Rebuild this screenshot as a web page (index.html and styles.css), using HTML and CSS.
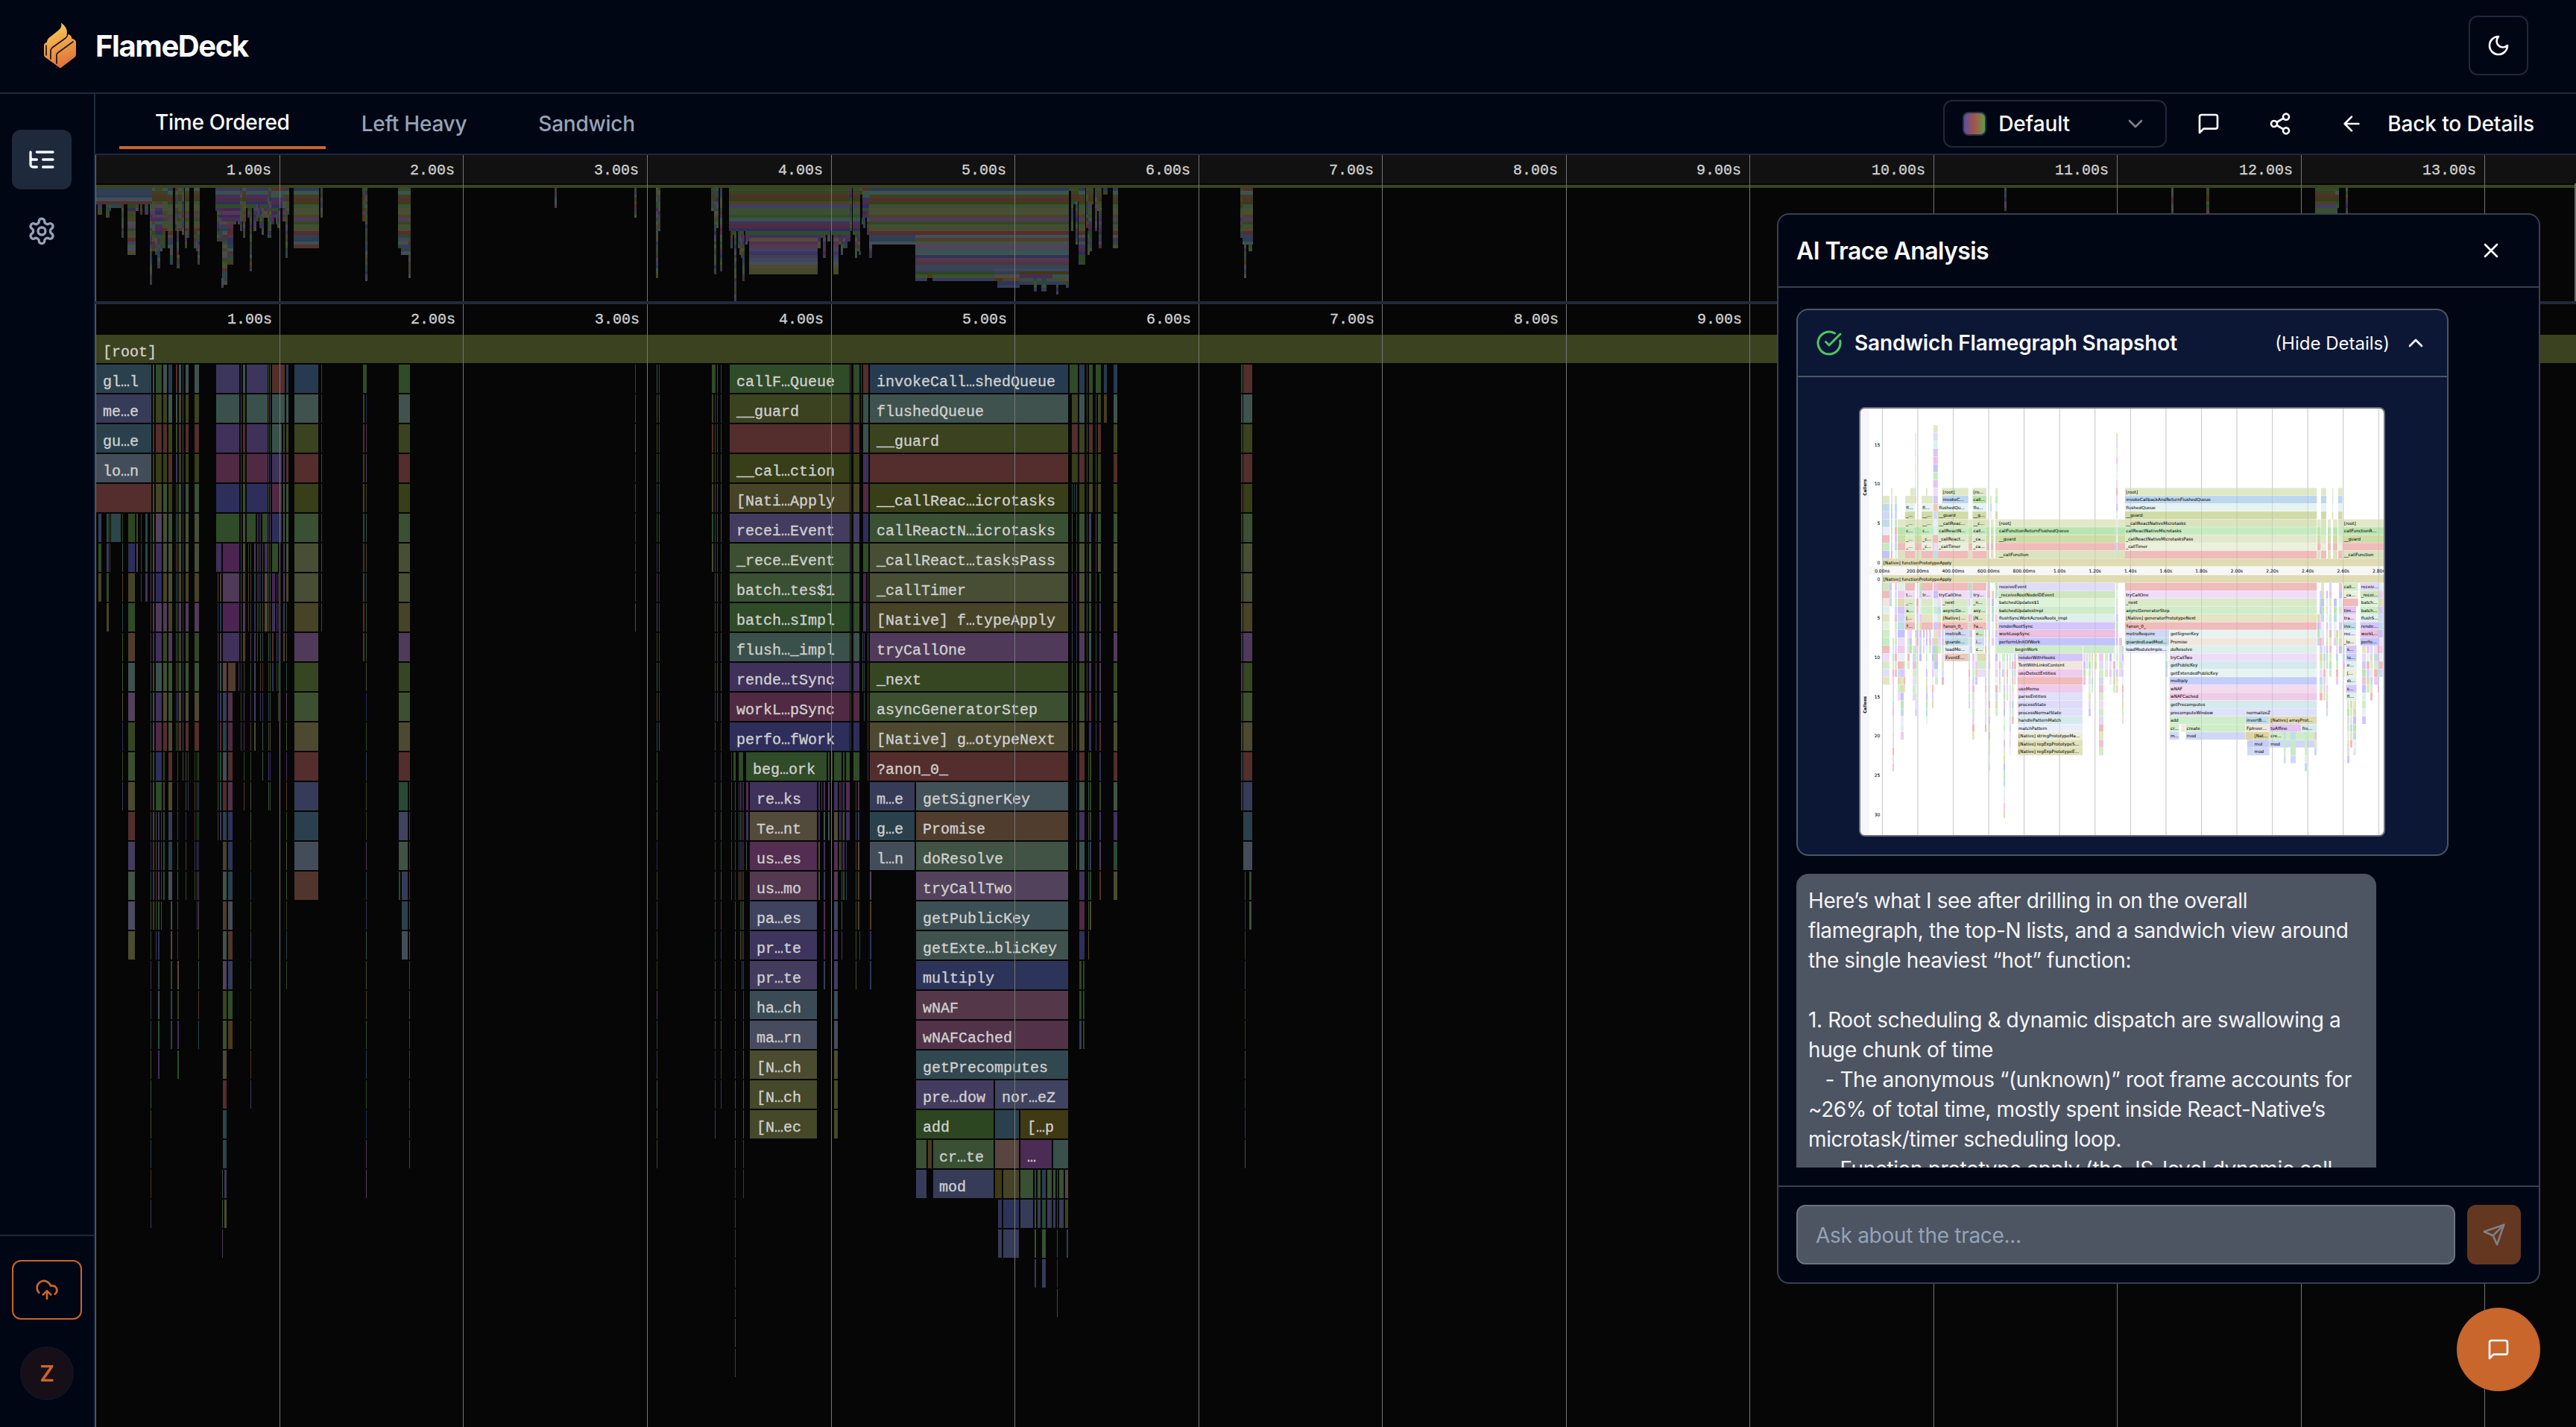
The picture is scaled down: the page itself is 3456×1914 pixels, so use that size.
FILE: index.html
```html
<!DOCTYPE html>
<html lang="en">
<head>
<meta charset="utf-8">
<title>FlameDeck</title>
<link rel="stylesheet" href="styles.css">
</head>
<body>
<div class="app">
  <header class="topbar">
    <div class="brand">
      <svg class="brand-mark" viewBox="0 0 44 62" width="44" height="62">
        <defs><linearGradient id="flame" x1="0.3" y1="0" x2="0.6" y2="1"><stop offset="0" stop-color="#f9cf55"/><stop offset=".45" stop-color="#f0a44a"/><stop offset="1" stop-color="#db6f38"/></linearGradient></defs>
        <path fill="url(#flame)" d="M23 .5C30 6 32 11 30.500 17L33 16C36 17 37 19 37.500 22C40 22 42.500 24 43 26V43C43 45 42 46 41 47L22 61.500 2 47C.500 46 0 45 0 43V31C0 29 1 28 4 26.500C4 23 6 21 9 19L19 11C23 8 24 5 23 .5Z"/>
        <g fill="none" stroke="#1a1416" stroke-width="1.700" stroke-linecap="round"><path d="M3 31V44"/><path d="M9 49V38C9 36 9.500 35.500 11 34L29 21C31 19 32 17 31.500 16"/><path d="M17 55V44C17 42 18 41 19 40.500L39 26"/></g>
      </svg>
      <span class="brand-name">FlameDeck</span>
    </div>
    <button class="theme-btn"><svg class="ic" viewBox="0 0 24 24" width="32" height="32"><path d="M12 3a6 6 0 0 0 9 9 9 9 0 1 1-9-9Z"/></svg></button>
  </header>
  <div class="body">
    <aside class="sidebar">
      <nav class="side-nav">
        <a class="side-item active"><svg class="ic" viewBox="0 0 24 24" width="40" height="40"><path d="M21 12h-8M21 6H8M21 18h-8M3 6v4c0 1.100.9 2 2 2h3M3 10v6c0 1.100.9 2 2 2h3"/></svg></a>
        <a class="side-item"><svg class="ic" viewBox="0 0 24 24" width="40" height="40"><path d="M12.220 2h-.44a2 2 0 0 0-2 2v.18a2 2 0 0 1-1 1.730l-.43.25a2 2 0 0 1-2 0l-.15-.08a2 2 0 0 0-2.730.73l-.22.38a2 2 0 0 0 .73 2.730l.15.1a2 2 0 0 1 1 1.720v.51a2 2 0 0 1-1 1.740l-.15.09a2 2 0 0 0-.73 2.730l.22.38a2 2 0 0 0 2.730.73l.15-.08a2 2 0 0 1 2 0l.43.25a2 2 0 0 1 1 1.730V20a2 2 0 0 0 2 2h.44a2 2 0 0 0 2-2v-.18a2 2 0 0 1 1-1.730l.43-.25a2 2 0 0 1 2 0l.15.08a2 2 0 0 0 2.730-.73l.22-.39a2 2 0 0 0-.73-2.730l-.15-.08a2 2 0 0 1-1-1.740v-.5a2 2 0 0 1 1-1.740l.15-.09a2 2 0 0 0 .73-2.730l-.22-.38a2 2 0 0 0-2.730-.73l-.15.08a2 2 0 0 1-2 0l-.43-.25a2 2 0 0 1-1-1.730V4a2 2 0 0 0-2-2z"/><circle cx="12" cy="12" r="3"/></svg></a>
      </nav>
      <div class="side-foot">
        <button class="upload"><svg class="ic" viewBox="0 0 24 24" width="32" height="32"><path d="M12 13v8M4 14.899A7 7 0 1 1 15.710 8h1.790a4.500 4.500 0 0 1 2.500 8.242M8 17l4-4 4 4"/></svg></button>
        <div class="avatar">Z</div>
      </div>
    </aside>
    <main class="content">
      <div class="toolbar">
        <div class="tabs">
          <a class="tab active">Time Ordered</a>
          <a class="tab">Left Heavy</a>
          <a class="tab">Sandwich</a>
        </div>
        <div class="tools">
          <div class="select"><i class="swatch"></i><span>Default</span><svg class="ic dim" viewBox="0 0 24 24" width="32" height="32"><path d="m6 9 6 6 6-6"/></svg></div>
          <svg class="ic tool-chat" viewBox="0 0 24 24" width="32" height="32"><path d="M21 15a2 2 0 0 1-2 2H7l-4 4V5a2 2 0 0 1 2-2h14a2 2 0 0 1 2 2z"/></svg>
          <svg class="ic tool-share" viewBox="0 0 24 24" width="32" height="32"><circle cx="18" cy="5" r="3"/><circle cx="6" cy="12" r="3"/><circle cx="18" cy="19" r="3"/><path d="m8.590 13.510 6.830 3.980M15.410 6.510l-6.820 3.980"/></svg>
          <a class="back"><svg class="ic" viewBox="0 0 24 24" width="32" height="32"><path d="m12 19-7-7 7-7M19 12H5"/></svg><span>Back to Details</span></a>
        </div>
      </div>
      <svg id="minimap" class="minimap" width="3328" height="196" viewBox="128 208 3328 196"></svg>
      <div class="divider"></div>
      <svg id="flame-chart" class="flame-chart" width="3328" height="1506" viewBox="128 408 3328 1506"></svg>
    </main>
  </div>

  <section class="panel">
    <div class="panel-head"><h2>AI Trace Analysis</h2><svg class="ic" viewBox="0 0 24 24" width="32" height="32"><path d="M18 6 6 18M6 6l12 12"/></svg></div>
    <div class="panel-body">
      <div class="card">
        <div class="card-head">
          <svg class="ic ok" viewBox="0 0 24 24" width="36" height="36"><path d="M21.801 10A10 10 0 1 1 17 3.335"/><path d="m9 11 3 3L22 4"/></svg>
          <span class="card-title">Sandwich Flamegraph Snapshot</span>
          <span class="card-toggle">(Hide Details)</span>
          <svg class="ic" viewBox="0 0 24 24" width="32" height="32"><path d="m18 15-6-6-6 6"/></svg>
        </div>
        <div class="card-body"><svg id="snapshot" class="snapshot" width="702" height="572" viewBox="0 0 702 572"></svg></div>
      </div>
      <div class="message">Here’s what I see after drilling in on the overall
flamegraph, the top-N lists, and a sandwich view around
the single heaviest “hot” function:

1. Root scheduling &amp; dynamic dispatch are swallowing a
huge chunk of time
   - The anonymous “(unknown)” root frame accounts for
~26% of total time, mostly spent inside React-Native’s
microtask/timer scheduling loop.
   - Function.prototype.apply (the JS-level dynamic call</div>
    </div>
    <div class="panel-foot">
      <div class="ask">Ask about the trace...</div>
      <button class="send"><svg class="ic" viewBox="0 0 24 24" width="32" height="32"><path d="m22 2-7 20-4-9-9-4ZM22 2 11 13"/></svg></button>
    </div>
  </section>
  <button class="fab"><svg class="ic" viewBox="0 0 24 24" width="32" height="32"><path d="M21 15a2 2 0 0 1-2 2H7l-4 4V5a2 2 0 0 1 2-2h14a2 2 0 0 1 2 2z"/></svg></button>
</div>
<script src="app.js"></script>
</body>
</html>
```
FILE: styles.css
```css
* { box-sizing: border-box; }
body {
  margin: 0;
  background: #010614;
  color: #f8fafc;
  font-family: Inter, "Liberation Sans", sans-serif;
  font-size: 28px;
  overflow: hidden;
}
button { font: inherit; color: inherit; background: none; border: 0; padding: 0; }
svg { display: block; flex: none; }
.ic { fill: none; stroke: currentColor; stroke-width: 2; stroke-linecap: round; stroke-linejoin: round; }

.app { position: relative; display: flex; flex-direction: column; width: 3456px; height: 1914px; overflow: hidden; }
.topbar {
  display: flex; align-items: flex-start; justify-content: space-between;
  height: 126px; padding: 21px 64px 0 59px;
  border-bottom: 2px solid #1e293b;
}
.brand { display: flex; align-items: center; height: 80px; gap: 25px; }
.brand-mark { margin-top: -1px; }
.brand-name { font-size: 40px; font-weight: 700; letter-spacing: -1.4px; line-height: 80px; margin-top: 2px; }
.theme-btn { display: grid; place-items: center; width: 80px; height: 80px; border: 2px solid #1e293b; border-radius: 12px; }

.body { display: flex; flex: 1; min-height: 0; }
.sidebar { display: flex; flex-direction: column; justify-content: space-between; width: 128px; border-right: 2px solid #1e293b; }
.side-nav { display: flex; flex-direction: column; gap: 16px; padding: 48px 16px 0; }
.side-item { display: grid; place-items: center; width: 80px; height: 80px; border-radius: 12px; color: #94a3b8; }
.side-item.active { background: #1e293b; color: #f8fafc; }
.side-foot { display: flex; flex-direction: column; align-items: center; gap: 36px; height: 258px; padding-top: 32px; border-top: 2px solid #1e293b; }
.upload { display: grid; place-items: center; width: 94px; height: 80px; border: 2px solid #c8662b; border-radius: 12px; color: #c8662b; }
.avatar { display: grid; place-items: center; width: 72px; height: 72px; border: 2px solid #0e1424; border-radius: 50%; background: #170f18; color: #c8662b; font-size: 30px; font-weight: 600; }

.content { display: flex; flex-direction: column; width: 3328px; background: #060606; }
.toolbar { display: flex; justify-content: space-between; height: 82px; padding: 0 56px 0 32px; background: #010614; border-bottom: 2px solid #1e293b; }
.tabs { display: flex; height: 74px; }
.tab { padding: 23px 48px 0; line-height: 34px; font-weight: 500; color: #94a3b8; letter-spacing: -.25px; }
.tab.active { padding-top: 21px; color: #f8fafc; border-bottom: 4px solid #c8662b; }
.tools { display: flex; align-items: center; height: 80px; font-weight: 500; letter-spacing: -.12px; }
.select { display: flex; align-items: center; width: 300px; height: 64px; padding: 0 24px; border: 2px solid #1e293b; border-radius: 12px; }
.select span { flex: 1; padding-left: 16px; }
.swatch { width: 32px; height: 32px; border: 2px solid #2a3448; border-radius: 8px; background: linear-gradient(90deg, #5b4fa0, #a35548 50%, #5f9a48); }
.dim { opacity: .5; }
.tool-chat { margin-left: 40px; }
.tool-share { margin-left: 64px; }
.back { display: flex; align-items: center; gap: 32px; margin-left: 64px; }

.divider { height: 4px; background: #1f2a3d; }
.lane-text, .tick {
  font-family: "Courier New", "Liberation Mono", monospace; font-size: 20px;
  fill: #cfcfcf; stroke: #cfcfcf; stroke-width: .35px; white-space: pre;
}
.tick { text-anchor: end; }

.panel {
  position: absolute; left: 2384px; top: 286px;
  display: flex; flex-direction: column; width: 1024px; height: 1436px;
  background: #010614; border: 2px solid #374151; border-radius: 16px;
}
.panel-head { display: flex; align-items: center; justify-content: space-between; height: 98px; padding: 0 48px 0 24px; border-bottom: 2px solid #374151; }
.panel-head h2 { margin: 0; font-size: 32px; font-weight: 600; letter-spacing: -.6px; }
.panel-body { display: flex; flex-direction: column; flex: none; gap: 24px; height: 1152px; margin: 28px 24px 0; overflow: hidden; }
.card { flex: none; width: 875px; height: 734px; background: #0c1736; border: 2px solid #4b5563; border-radius: 16px; }
.card-head { display: flex; align-items: center; height: 90px; padding: 0 26px 0 24px; border-bottom: 2px solid #4b5563; }
.ok { color: #4fc75f; }
.card-title { flex: 1; padding-left: 16px; font-weight: 600; letter-spacing: -.12px; }
.card-toggle { font-size: 24px; padding-right: 19px; }
.card-body { padding: 40px 0 0 82px; }
.snapshot { box-sizing: content-box; border: 2px solid #6b7280; border-radius: 8px; background: #fff; }
.snapshot text { font-family: "DejaVu Sans", sans-serif; font-size: 5.7px; fill: #111; stroke: #111; stroke-width: .08px; white-space: pre; }
.snapshot .side { font-weight: 700; text-anchor: middle; }
.snapshot .num { text-anchor: end; font-size: 6px; }
.snapshot .mid { text-anchor: middle; font-size: 6px; }
.message { flex: none; width: 778px; padding: 16px; background: #4d5462; border-radius: 16px; color: #f3f4f6; line-height: 40px; letter-spacing: -.4px; white-space: pre; }
.panel-foot { display: flex; gap: 16px; margin-top: auto; height: 130px; padding: 24px 24px; border-top: 2px solid #374151; }
.ask { width: 884px; height: 80px; padding: 0 24px; line-height: 78px; letter-spacing: -.3px; color: #94a3b8; background: #4d5462; border: 2px solid #6b7280; border-radius: 12px; }
.send { display: grid; place-items: center; width: 72px; height: 80px; border-radius: 12px; background: #643720; color: #7f7f85; }
.fab { position: absolute; left: 3296px; top: 1754px; display: grid; place-items: center; width: 112px; height: 112px; border-radius: 50%; background: #c8662b; }
```
FILE: app.js
```js
const NS = 'http://www.w3.org/2000/svg';
function add(parent, tag, attrs, text) {
  const el = document.createElementNS(NS, tag);
  for (const k in attrs) el.setAttribute(k, attrs[k]);
  if (text !== undefined) el.textContent = text;
  parent.appendChild(el);
  return el;
}

// Frame colours, one letter each.
const C = {
  A: '#2a414d', B: '#363b58', C: '#434d59', R: '#532e2c', G: '#2f4b28', g: '#395033',
  O: '#3b4220', o: '#373e18', K: '#474326', L: '#484e34', N: '#273b50', T: '#3f524e',
  t: '#3a514b', P: '#433c5f', p: '#3f315a', M: '#502a42', I: '#2e2e5b', V: '#503a5a',
  v: '#4b2452', F: '#364622', H: '#3c5031', J: '#4d4930', S: '#425058', D: '#503d2e',
  E: '#405344', W: '#52425c', X: '#3b4f54', Y: '#2d3459', Z: '#543849', z: '#513248',
  U: '#324850', Q: '#4a4a63', c: '#3c365c', r: '#50352c', h: '#524a3a', u: '#532d52',
  m: '#533850', q: '#40435f', i: '#3d355e', a: '#3a4b55', b: '#464b5e', k: '#4a4b2f',
  l: '#454829', s: '#284a35', y: '#594440', f: '#3f3914', j: '#4a2c54', d: '#4a3a20',
  w: '#2b4620', e: '#2a4649'
};
const NOISE = 'GTpoJEDIAKVsFeRWHLcBzgOt';
const STD = 'NTORogLLKVFHJR';

// [x, width, first row, colours per row] or [x, width, first row, last row] for slivers.
const columns = [
  [129,74,0,'ABACR'],[132,4,5,'BGK'],[143,3,5,'sBGK'],[147,1,5,6],[149,13,5,'e'],[164,1,5,14],
  [172,9,5,'wIKGDTWFHJRPEQk'],[183,2,5,6],[189,1,5,7],[195,3,5,'eec'],[202,1,5,28],
  [205,2,0,'TORogLLVVpDTWFgJRpd'],[209,8,0,'GORoKWpIVptpMIG'],[209,1,15,19],[212,2,15,'pcVsYACsp'],[216,1,15,18],
  [219,5,0,'TORogLLKVFHJR'],[219,2,13,'wKFss'],[226,5,0,'NTORogLLKVHHJRJBAC'],[229,2,18,'tyseA'],
  [236,2,0,'RTGc'],[236,1,4,12],[238,1,4,20],[238,2,20,'yopG'],
  [240,3,0,'TKRogLLKVFHJR'],[245,1,0,13],[249,4,0,'TORogLLKVFHJR'],[249,1,13,17],[252,1,13,14],
  [261,6,0,'TORogLLKVFHJR'],[261,1,13,17],[264,1,13,18],[266,1,13,22],
  [290,31,0,'ctpMIG'],[290,7,6,'p'],[299,22,6,'vVvp'],[299,5,10,'yBACRAKEDEWFHJRee'],[301,3,27,'ck'],[298,1,27,29],
  [306,10,10,'D'],[306,6,11,'zMRzYYACrBGd'],[320,1,10,10],[295,2,7,'DYVtBRsep'],[292,1,7,15],
  [323,1,0,12],[326,3,0,'TORogLLKVD'],[327,1,10,14],[331,28,0,'ctpMI'],[331,12,5,'G'],[345,1,5,9],[347,1,5,8],[349,1,5,11],
  [352,7,5,'G'],[333,1,6,8],[336,1,6,24],[341,2,6,'VAIcPPk'],[352,1,6,13],[355,4,6,'pyJ'],
  [360,1,0,14],[362,1,0,14],[365,17,0,'Rt'],[365,13,2,'tpMI'],[365,8,6,'G'],[365,4,7,'vp'],[365,2,9,'RI'],[371,1,7,10],[373,1,7,11],
  [380,2,2,'GcETpVcK'],[384,3,0,'NTORgHLK'],[384,1,8,20],[395,32,0,STD + 'BACr'],[431,1,0,8],
  [487,5,0,'G'],[487,2,1,'OROKsoDRd'],[491,1,1,27],[535,15,0,'GTORogLLKVFHJR'],[535,12,14,'sqE'],[535,2,17,'s'],[539,8,17,'BAC'],[549,1,14,26],
  [852,1,0,8],[881,1,0,26],[884,1,0,12],
  [955,5,0,'G'],[955,2,1,'OROKsk'],[959,1,1,25],[962,1,0,11],[967,1,0,24],
  [979,161,0,'GORoKPHgGtpMI'],[981,1,13,17],[984,3,13,'G'],[991,6,13,'G'],[1001,108,13,'G'],[1111,2,13,'GVt'],[1116,1,13,13],
  [1119,10,13,'G'],[1131,2,13,'GpTpF'],[1135,5,13,'Gup'],[986,1,14,33],[991,1,14,17],[993,1,14,19],[995,1,14,20],[997,1,14,27],[1001,3,14,'up'],[1001,1,16,16],
  [1006,90,14,'phumqiPabkll'],[1119,5,14,'phumqiPabkll'],[1098,2,14,'pphk'],[1102,1,14,14],[1105,2,14,'utpcuvB'],
  [1126,2,14,'vck'],[1129,1,14,19],[1135,1,16,17],[1148,1,14,20],[1151,2,14,'upydD'],[1153,1,19,19],
  [1141,1,0,12],[1145,8,0,'GORoKPHgGtpMIG'],[1155,1,0,1],[1158,7,0,'RttpMIG'],[1158,4,7,'vp'],[1164,1,7,13],[1157,1,9,10],[1159,1,9,11],
  [1167,266,0,STD],[1167,60,14,'BAC'],[1167,2,17,'WDYY'],[1229,204,14,'SDEWXTYZzU'],
  [1229,104,24,'P'],[1335,98,24,'q'],[1229,104,25,'w'],[1335,32,25,'Ay'],[1369,64,25,'f'],
  [1229,14,26,'gB'],[1245,5,26,'d'],[1252,81,26,'gB'],[1369,42,26,'j'],[1413,20,26,'t'],
  [1335,9,27,'f'],[1346,21,27,'KYB'],[1339,5,28,'YB'],[1369,17,27,'gB'],[1388,2,27,'AggB'],[1392,4,27,'gB'],[1398,5,27,'AsgB'],
  [1405,6,27,'gB'],[1413,3,27,'gB'],[1418,1,27,31],[1421,6,27,'gB'],[1429,4,27,'yF'],[1431,2,29,'B'],
  [1435,11,0,'G'],[1438,8,1,'ORo'],[1438,1,4,12],[1441,1,4,4],[1444,1,4,16],[1448,7,0,STD + 'EptpMI'],[1448,3,20,'wwB'],[1453,2,20,'www'],
  [1458,1,0,11],[1461,5,0,'GORoK'],[1461,3,5,'PHgGtpMI'],[1460,1,13,19],[1462,2,13,'wwsBsJ'],
  [1470,7,0,'G'],[1470,1,1,12],[1473,4,1,'ORoKgL'],[1475,2,7,'scpVcMIGpVR'],[1481,4,0,'Nd'],[1494,5,0,STD + 'EpsJ'],
  [1665,2,0,'GTOKRogLLcVFHAB'],[1668,12,0,'RTORogLLKVFHJRBAC'],[1676,3,17,'GH'],[1670,1,17,26]
];
const overviewOnly = [
  [745,1,0,5],[2690,1,0,6],[2914,1,0,8],[2961,2,0,'GGRoHsDy'],[3107,28,0,'GORoKPHgG'],[3134,3,0,'GTRoGg'],[3148,1,0,9]
];
const colourAt = (col, i) => {
  if (typeof col[3] === 'string') return C[col[3][i]];
  return C[NOISE[(col[0] * 7 + i * 5 + ((col[0] + i * i) % 3)) % NOISE.length]];
};
const rowsIn = col => typeof col[3] === 'string' ? col[3].length : col[3] - col[2] + 1;

const tickX = k => Math.floor(128.8 + 246.55 * k);
function ticks(svg, y, top, bottom, dx) {
  for (let k = 0; k < 14; k++) {
    add(svg, 'rect', { x: tickX(k), y: top, width: 1, height: bottom - top, fill: '#747474' });
    if (k) add(svg, 'text', { x: tickX(k) - dx, y, class: 'tick' }, k + '.00s');
  }
}

// Overview strip
const mini = document.getElementById('minimap');
add(mini, 'rect', { x: 128, y: 208, width: 3328, height: 38, fill: '#111111' });
add(mini, 'rect', { x: 128, y: 248, width: 3328, height: 4, fill: C.O });
for (const col of columns.concat(overviewOnly)) {
  for (let i = 0; i < rowsIn(col); i++) {
    const r = col[2] + i, y = Math.round(252 + 4.48 * r);
    add(mini, 'rect', { x: col[0] - 1, y, width: col[1] + 2, height: Math.round(252 + 4.48 * (r + 1)) - y, fill: colourAt(col, i) });
  }
}
ticks(mini, 234, 208, 404, 11);
add(mini, 'rect', { x: 3454, y: 246, width: 2, height: 158, fill: '#6a6a6a' });

// Main chart
const chart = document.getElementById('flame-chart');
add(chart, 'rect', { x: 129, y: 449, width: 3327, height: 38, fill: C.O });
for (const col of columns) {
  for (let i = 0; i < rowsIn(col); i++) {
    add(chart, 'rect', { x: col[0], y: 489 + 40 * (col[2] + i), width: col[1], height: 38, fill: colourAt(col, i) });
  }
}
const labels = [
  [138, -1, ['[root]']],
  [138, 0, ['gl…l', 'me…e', 'gu…e', 'lo…n']],
  [988, 0, ['callF…Queue', '__guard', '', '__cal…ction', '[Nati…Apply', 'recei…Event', '_rece…Event', 'batch…tes$1', 'batch…sImpl', 'flush…_impl', 'rende…tSync', 'workL…pSync', 'perfo…fWork']],
  [1010, 13, ['beg…ork']],
  [1015, 14, ['re…ks', 'Te…nt', 'us…es', 'us…mo', 'pa…es', 'pr…te', 'pr…te', 'ha…ch', 'ma…rn', '[N…ch', '[N…ch', '[N…ec']],
  [1176, 0, ['invokeCall…shedQueue', 'flushedQueue', '__guard', '', '__callReac…icrotasks', 'callReactN…icrotasks', '_callReact…tasksPass', '_callTimer', '[Native] f…typeApply', 'tryCallOne', '_next', 'asyncGeneratorStep', '[Native] g…otypeNext', '?anon_0_', 'm…e', 'g…e', 'l…n']],
  [1238, 14, ['getSignerKey', 'Promise', 'doResolve', 'tryCallTwo', 'getPublicKey', 'getExte…blicKey', 'multiply', 'wNAF', 'wNAFCached', 'getPrecomputes', 'pre…dow', 'add']],
  [1344, 24, ['nor…eZ']], [1378, 25, ['[…p', '…']], [1260, 26, ['cr…te', 'mod']]
];
for (const [x, row, list] of labels) {
  list.forEach((t, i) => { if (t) add(chart, 'text', { x, y: 518 + 40 * (row + i), class: 'lane-text' }, t); });
}
ticks(chart, 434, 408, 1914, 10);

// Sandwich snapshot
const snap = document.getElementById('snapshot');
const S = {
  r: '#f0bbbb', o: '#cfdca6', e: '#e0e8c8', n: '#bcd7f0', w: '#e6f3f1', c: '#dae3bd', g: '#c5ebc1', G: '#b9e6b0',
  l: '#e2e8cb', L: '#ebefdb', k: '#e0dbb2', p: '#dfdbfb', q: '#cfe6bf', b: '#dff3dc', B: '#cfecca', t: '#dff0ec',
  P: '#d4c6fa', m: '#eec0e0', i: '#c3c3fb', v: '#eedcf8', x: '#dbe9c9', y: '#d0edc9', j: '#e5e5c3', s: '#cfd9f7',
  d: '#bfdde6', a: '#e9eefb', z: '#f1e7dd', h: '#efcbee', u: '#dfe1fa', T: '#d5eaec', f: '#efc8bb', M: '#f3daee',
  N: '#eecbe8', Y: '#c5cefa', H: '#e2c5f3', K: '#dbd5a0', J: '#dfe2bc'
};
const STEP = 10.53;
const yUp = n => 201.3 - STEP * n, yDown = n => 223.3 + STEP * n;
function frame(x, w, y, colour, text) {
  add(snap, 'rect', { x, y, width: w, height: 10.2, fill: S[colour] });
  if (text) add(snap, 'text', { x: x + 1.3, y: y + 7.2 }, text);
}
function down(x, w, row, colours, texts) {
  [...colours].forEach((c, i) => frame(x, w, yDown(row + i), c, texts && texts[i]));
}
function up(x, w, row, colours, texts) {
  [...colours].forEach((c, i) => frame(x, w, yUp(row - i), c, texts && texts[i]));
}
add(snap, 'rect', { x: 0, y: 0, width: 12, height: 572, fill: '#f6f6f6' });
add(snap, 'rect', { x: 12, y: 211.7, width: 690, height: 11.3, fill: '#f7f7f7' });
for (let k = 0; k < 15; k++) add(snap, 'rect', { x: 28.9 + 47.57 * k, y: 0, width: 0.9, height: 572, fill: '#d6d6d6' });

// narrow frames around the labelled stacks
const SN = 'yPrtvGsjhBdmkpaxi';
function sliver(x, w, r0, r1) {
  for (let r = r0; r <= r1; r++) frame(x, w, yDown(r), SN[(Math.round(x * 3) + r * 5 + (r * r) % 3) % SN.length]);
}
[[38,4,1,3],[43,2,8,24],[46,3,1,12],[50,9.5,1,6],[50,9.5,7,11],[50,4,12,15],[54,4,12,20],[58,2,11,14],[63,3,7,11],[66,3,7,9],[70,4,9,15],[73.5,2,7,17],[75,3,3,8],
 [79,3,1,10],[84,2,7,9],[88,2,5,18],[92,3,6,9],[96,2,8,16],[98,6,1,12],[100,4,9,13],[104,4,3,9],[109,3,7,13],[145,2,1,16],[147,3,1,9],[150,3,10,20],[154,3,10,13],
 [157,10,10,12],[167,2,7,19],[170,4,1,6],[172,2,7,24],[176,3,2,8],[181,3,1,9],[181,3,10,17],[186,2,10,14],[190,2,9,12],[192,2,10,30],[196,2,10,15],[200,1.5,10,22],[203,2.5,10,18],
 [206,3,10,13],[299,3,10,13],[303,2,10,11],[306,3,9,17],[310,2,9,14],[314,3,10,11],[320,6,10,22],[328,4,9,12],[334,3,9,13],[339,3,10,14],[343,2.5,1,14],[347,4,8,12],[351,2,9,18],
 [613,3,5,8],[616,4,2,15],[618,4,1,8],[621,3,9,15],[625,2,2,17],[629,3,1,12],[635,4,3,8],[638,3,7,13],[642,4,1,9],[648,2,8,12],[653,3,16,23],[657,3,16,21],[661,4,16,22],
 [673,5,9,18],[679,4,9,14],[684,3,9,15],[689,5,9,13],[696,5,1,12],[694,2,3,14]].forEach(a => sliver(...a));

const native = '[Native] functionPrototypeApply';
down(29.5, 672.5, 0, 'k', [native]);
up(29.5, 672.5, 0, 'k', [native]);
down(29.5, 9.5, 1, 'qrztjbygrvxuj');
down(60, 13, 1, 'rvxyjr', ['', 't…', '_…', 'a…', '[…', '?…']);
down(82, 15, 1, 'rvxyjr', ['', 'tr…', '', '', '', '']);
down(104, 40.7, 1, 'rv', ['', 'tryCallOne']);
down(109.3, 35.3, 3, 'xyjr', ['_next', 'asyncGe…', '[Native] …', '?anon_0_']);
down(112.7, 32, 7, 'sdaf', ['metroR…', 'guarde…', 'loadMo…', 'EventE…']);
down(150.3, 18.7, 1, 'rvxyjr', ['', 'try…', '_n…', 'asy…', '[N…', '?a…']);
down(153.7, 12.3, 7, 'gsb', ['e…', 'l…', 'c…']);
down(184.7, 157, 1, 'pqbBtPmi', ['receiveEvent', '_receiveRootNodeIDEvent', 'batchedUpdates$1', 'batchedUpdatesImpl', 'flushSyncWorkAcrossRoots_impl', 'renderRootSync', 'workLoopSync', 'performUnitOfWork']);
down(181, 25, 9, 'y');
down(206.3, 92, 9, 'y', ['beginWork']);
down(299, 42, 9, 'B');
down(210.7, 87.3, 10, 'PzhrhupuTaLJJ', ['renderWithHooks', 'TextWithLinksContent', 'useDetectEntities', '', 'useMemo', 'parseEntities', 'processState', 'processNormalState', 'handlePatternMatch', 'matchPattern', '[Native] stringPrototypeMa…', '[Native] regExpPrototypeS…', '[Native] regExpPrototypeE…']);
down(355, 257.3, 1, 'rvxyjr', ['', 'tryCallOne', '_next', 'asyncGeneratorStep', '[Native] generatorPrototypeNext', '?anon_0_']);
down(355, 59, 7, 'sda', ['metroRequire', 'guardedLoadMod…', 'loadModuleImple…']);
down(409.5, 2.5, 10, 'tds');
down(414.7, 197.6, 7, 'wztvTwYMNT', ['getSignerKey', 'Promise', 'doResolve', 'tryCallTwo', 'getPublicKey', 'getExtendedPublicKey', 'multiply', 'wNAF', 'wNAFCached', 'getPrecomputes']);
down(414.7, 102, 17, 'uy', ['precomputeWindow', 'add']);
down(516.7, 95.6, 17, 'u', ['normalizeZ']);
down(516.7, 32, 18, 'dz', ['invertB…', 'FpInver…']);
down(549, 63.3, 18, 'k', ['[Native] arrayProt…']);
down(414.7, 12.7, 19, 'ys', ['cr…', 'm…']);
down(430.5, 5, 19, 'z');
down(436.3, 80, 19, 'ys', ['create', 'mod']);
down(549, 42, 19, 'H', ['toAffine']);
down(591.5, 20.8, 19, 'T', ['fro…']);
down(516.7, 10.5, 20, 'K');
down(527.3, 21.3, 20, 'KYs', ['[Nat…', 'mul', 'mod']);
down(519, 8, 21, 'Ys');
down(549, 63.3, 20, 'ys', ['cre…', 'mod']);
down(568, 2.5, 20, 'dgys');
down(577, 7, 20, 'dggs');
down(596, 3, 20, 'gyytd');
down(609, 3, 20, 'fjs');
down(647.5, 20, 1, 'yLr', ['call…', '_ca…']);
down(647.5, 17.5, 4, 'HvdaL', ['tim…', 'tra…', 'inv…', 'rec…', '_lo…']);
down(651.5, 14, 9, 'PYtLtPt', ['s…', 'lo…', 'e…', '[…', 'di…', 's…', 'fl…']);
down(670.5, 25, 1, 'pqbBtPmi', ['receiv…', '_recei…', 'batch…', 'batch…', 'flushS…', 'rende…', 'workL…', 'perfo…']);

up(29.5, 9.5, 8, 'edsdargi');
up(41, 2, 9, 'evdnsgBsr');
up(46, 3, 8, 'edsgrPdt');
[[50,10],[73,9],[97,7],[145,5],[169,4],[175,3.5],[181,3.7],[341.6,13.4],[613,4.5],[619,6],[627,4],[634,6],[641,5.5]].forEach(([x, w]) => up(x, w, 5, 'eGorc'));
up(67, 6, 9, 'en'); up(88, 2, 9, 'eg'); up(174, 2, 8, 'edw'); up(181, 3, 9, 'egwo');
up(60, 13, 8, 'ewocglLr', ['', 'fl…', '_…', '_…', 'c…', '_…', '_…']);
up(82, 15, 8, 'ewocglLr', ['', 'fl…', '__…', '__…', 'c…', '_c…', '_c…']);
up(97.7, 6, 17, 'eptPmigHvPfsatrvd');
up(73.3, 1.3, 16, 'evpwxtbdr');
up(343, 2.3, 16, 'jpbhtwMrvPtzTwsg');
up(109.3, 35.3, 9, 'en', ['[root]', 'invokeC…']);
up(104, 40.7, 7, 'wocglLr', ['flushedQu…', '__guard', '__callReac…', 'callReactN…', '_callReact…', '_callTimer']);
up(150.3, 18.7, 9, 'eGwocglLr', ['[ro…', 'call…', 'flu…', '__g…', '__c…', 'call…', '_ca…', '_ca…']);
up(184.7, 157, 5, 'eGorc', ['[root]', 'callFunctionReturnFlushedQueue', '__guard', '', '__callFunction']);
up(355, 257.3, 9, 'enwocglLr', ['[root]', 'invokeCallbackAndReturnFlushedQueue', 'flushedQueue', '__guard', '__callReactNativeMicrotasks', 'callReactNativeMicrotasks', '_callReactNativeMicrotasksPass', '_callTimer']);
up(618, 7, 9, 'enwocglLr'); up(633, 1.2, 9, 'egwo'); up(641, 5.5, 9, 'enwocglLr');
up(647.5, 54.5, 5, 'eGorc', ['[root]', 'callFunctionR…', '__guard', '', '__callFunction']);

for (let k = 0; k < 15; k++) {
  const x = 29.3 + 47.57 * k;
  add(snap, 'rect', { x: x - 0.4, y: 0, width: 0.9, height: 572, fill: '#999999', 'fill-opacity': 0.3 });
  const ms = k * 200;
  add(snap, 'text', { x, y: 220.2, class: 'mid' }, k === 0 ? '0.00ns' : ms < 1000 ? ms + '.00ms' : (ms / 1000).toFixed(2) + 's');
}
for (const n of [0, 5, 10, 15]) add(snap, 'text', { x: 26.3, y: yUp(n) + 7.4, class: 'num' }, n);
for (const n of [0, 5, 10, 15, 20, 25, 30]) add(snap, 'text', { x: 26.3, y: yDown(n) + 7.4, class: 'num' }, n);
add(snap, 'text', { transform: 'translate(8 105.7) rotate(-90)', class: 'side' }, 'Callers');
add(snap, 'text', { transform: 'translate(8 397.3) rotate(-90)', class: 'side' }, 'Callees');
```
